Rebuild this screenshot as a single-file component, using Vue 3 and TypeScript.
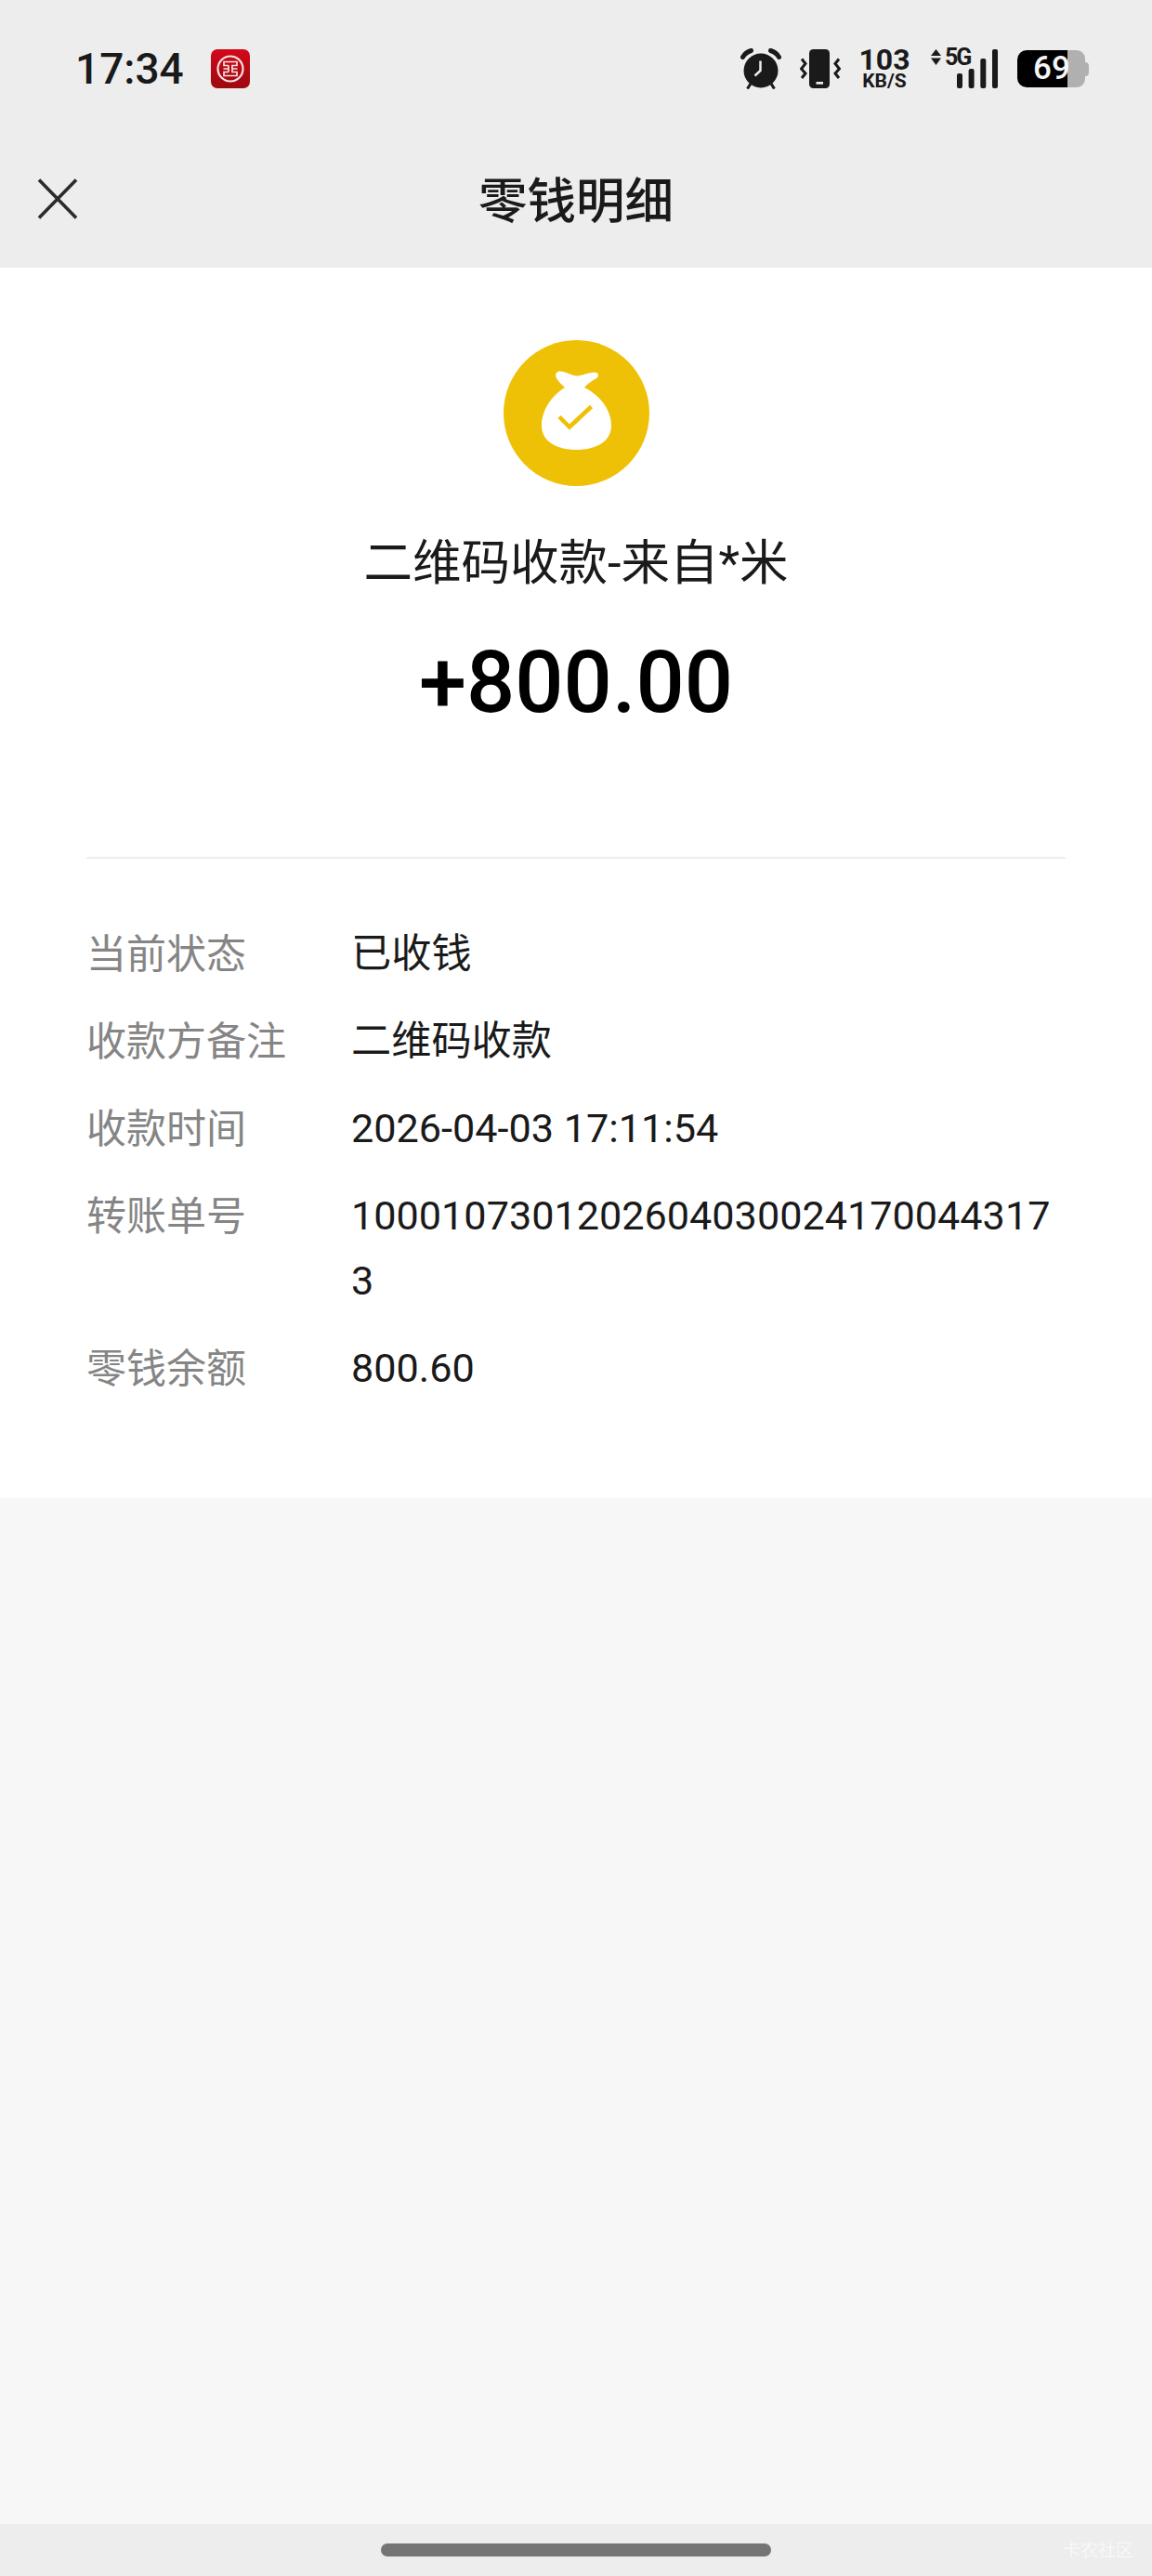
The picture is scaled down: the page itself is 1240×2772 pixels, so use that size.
<script setup lang="ts">
interface Row {
  label: string
  value: string
}

const rows: Row[] = [
  { label: '当前状态', value: '已收钱' },
  { label: '收款方备注', value: '二维码收款' },
  { label: '收款时间', value: '2026-04-03 17:11:54' },
  { label: '转账单号', value: '10001073012026040300241700443173' },
  { label: '零钱余额', value: '800.60' },
]
</script>

<template>
  <div class="page">
    <header class="top">
      <div class="status">
        <div class="status-left">
          <span class="time">17:34</span>
          <svg class="bank" viewBox="0 0 42 42" width="42" height="42">
            <defs>
              <linearGradient id="bankRed" x1="0" y1="0" x2="0" y2="1">
                <stop offset="0" stop-color="#d3081a" />
                <stop offset="1" stop-color="#9c0a10" />
              </linearGradient>
            </defs>
            <rect width="42" height="42" rx="7" fill="url(#bankRed)" />
            <circle cx="21" cy="21" r="13.500" fill="none" stroke="#f8e2e2" stroke-width="2.200" />
            <path d="M19 17.500H14V13.500H28V17.500H23V21H28.500M19 17.500V21H13.500M19 24.500H14V28.500H28V24.500H23V21M19 24.500V21" fill="none" stroke="#f8e2e2" stroke-width="1.700" />
          </svg>
        </div>
        <div class="status-right">
          <svg class="alarm" viewBox="0 0 44 44" width="44" height="44">
            <circle cx="22" cy="24" r="18.500" fill="#1a1a1a" />
            <path d="M2.500 9.500C4.500 6 8 3.500 11.500 2.500M41.500 9.500C39.500 6 36 3.500 32.500 2.500" fill="none" stroke="#1a1a1a" stroke-width="5" stroke-linecap="round" />
            <path d="M11 38L7.500 43.500M33 38L36.500 43.500" fill="none" stroke="#1a1a1a" stroke-width="3" />
            <path d="M21.500 13.500V24L15.500 29.500" fill="none" stroke="#ededed" stroke-width="2.500" />
          </svg>
          <svg class="vibrate" viewBox="0 0 44 42" width="44" height="42">
            <rect x="10" y="0" width="22" height="42" rx="4.500" fill="#1a1a1a" />
            <rect x="17.500" y="35" width="7.500" height="2.700" fill="#ededed" />
            <path d="M2 10.500L6 15.500L1.500 21L6 26L2 31" fill="none" stroke="#1a1a1a" stroke-width="3" />
            <path d="M42 10.500L38 15.500L42.500 21L38 26L42 31" fill="none" stroke="#1a1a1a" stroke-width="3" />
          </svg>
          <div class="speed">
            <span class="speed-num">103</span>
            <span class="speed-unit">KB/S</span>
          </div>
          <div class="net">
            <svg class="net-arrows" viewBox="0 0 11 17" width="11" height="17">
              <path d="M5.500 0L11 7H0ZM5.500 17L0 9.500H11Z" fill="#1a1a1a" />
            </svg>
            <span class="net-label">5G</span>
            <svg class="net-bars" viewBox="0 0 44 42" width="44" height="42">
              <rect x="0" y="26" width="6" height="16" rx="2" fill="#1a1a1a" />
              <rect x="12.600" y="21" width="6" height="21" rx="2" fill="#1a1a1a" />
              <rect x="25.300" y="10" width="6" height="32" rx="2" fill="#1a1a1a" />
              <rect x="38" y="0" width="6" height="42" rx="2" fill="#1a1a1a" />
            </svg>
          </div>
          <div class="battery">
            <span class="battery-fill"></span>
            <span class="battery-rest"></span>
            <span class="battery-nub"></span>
            <span class="battery-text">69</span>
          </div>
        </div>
      </div>
      <nav class="nav">
        <svg class="close" viewBox="0 0 44 44" width="44" height="44">
          <path d="M2 1.500L42 42.500M42 1.500L2 42.500" fill="none" stroke="#2b2b2b" stroke-width="3.600" />
        </svg>
        <h1 class="title">零钱明细</h1>
      </nav>
    </header>

    <main class="card">
      <div class="summary">
        <svg class="coin" viewBox="0 0 157 157" width="157" height="157">
          <circle cx="78.500" cy="78.500" r="78.500" fill="#eec106" />
          <path d="M60 33.500C66 33 72 38 79 38.500C86 38.500 92 34 100 35C103 36 102 40 100 41C95 44 90 47 87 51C103 59 116 74 116 92C116 110 98 118 78.500 118C59 118 41 110 41 92C41 74 53 59 66 51C62 47 58 44 56.500 40C55.500 36 57 34 60 33.500Z" fill="#fff" />
          <path d="M60 82.500L71 93.500L94.500 71.500" fill="none" stroke="#eec106" stroke-width="4.500" />
        </svg>
        <p class="subtitle">二维码收款-来自*米</p>
        <p class="amount">+800.00</p>
      </div>
      <div class="divider"></div>
      <dl class="details">
        <div v-for="row in rows" :key="row.label" class="row">
          <dt class="label">{{ row.label }}</dt>
          <dd class="value">{{ row.value }}</dd>
        </div>
      </dl>
    </main>

    <div class="filler"></div>

    <footer class="home">
      <span class="pill"></span>
      <span class="mark">卡农社区</span>
    </footer>
  </div>
</template>

<style>
html,
body {
  margin: 0;
  padding: 0;
  background: #f7f7f7;
}
</style>

<style scoped>
.page {
  display: flex;
  flex-direction: column;
  width: 1240px;
  height: 2772px;
  background: #f7f7f7;
  font-family: Roboto, "Noto Sans CJK SC", sans-serif;
  color: #1a1a1a;
}

.top {
  background: #ededed;
  height: 288px;
  box-sizing: border-box;
}

.status {
  display: flex;
  align-items: center;
  justify-content: space-between;
  height: 148px;
  padding: 0 68px 0 81px;
}

.status-left {
  display: flex;
  align-items: center;
  gap: 29px;
}

.time {
  font-size: 46px;
  font-weight: 500;
  line-height: 54px;
  color: #1a1a1a;
}

.bank {
  display: block;
}

.status-right {
  display: flex;
  align-items: center;
  gap: 20px;
}

.alarm,
.vibrate {
  display: block;
}

.speed {
  display: flex;
  flex-direction: column;
  align-items: center;
  width: 54px;
  font-weight: 700;
}

.speed-num {
  font-size: 32px;
  line-height: 25px;
}

.speed-unit {
  font-size: 21px;
  line-height: 19px;
  margin-top: 1px;
}

.net {
  position: relative;
  display: flex;
  align-items: flex-start;
  width: 72px;
  height: 44px;
  margin-left: 3px;
}

.net-arrows {
  display: block;
  margin-top: 1px;
}

.net-label {
  margin-left: 4px;
  font-size: 25px;
  font-weight: 700;
  line-height: 20px;
  letter-spacing: -2px;
}

.net-bars {
  position: absolute;
  right: 0;
  bottom: 1px;
}

.battery {
  position: relative;
  display: flex;
  align-items: center;
  width: 77px;
  height: 40px;
  margin-left: 1px;
}

.battery-fill {
  width: 54px;
  height: 40px;
  background: #000;
  border-radius: 10px 0 0 10px;
}

.battery-rest {
  width: 19px;
  height: 40px;
  background: #b0b0b0;
  border-radius: 0 9px 9px 0;
}

.battery-nub {
  width: 4px;
  height: 15px;
  background: #b0b0b0;
  border-radius: 0 4px 4px 0;
}

.battery-text {
  position: absolute;
  left: 17px;
  top: 0;
  font-size: 35px;
  font-weight: 500;
  line-height: 40px;
  color: #f5f5f5;
}

.nav {
  position: relative;
  display: flex;
  align-items: center;
  justify-content: center;
  height: 132px;
}

.close {
  position: absolute;
  left: 40px;
  top: 44px;
}

.title {
  margin: 6px 0 0;
  font-size: 52.500px;
  font-weight: 500;
  line-height: 72px;
  color: #1a1a1a;
}

.card {
  background: #fff;
  padding: 78px 93px 104px;
}

.summary {
  display: flex;
  flex-direction: column;
  align-items: center;
}

.coin {
  display: block;
}

.subtitle {
  margin: 47px 0 0;
  font-size: 52.500px;
  line-height: 72px;
  color: #1a1a1a;
}

.amount {
  margin: 37px 0 0;
  font-size: 92px;
  font-weight: 500;
  line-height: 112px;
  color: #000;
}

.divider {
  height: 2px;
  margin-top: 131px;
  background: #eeeeee;
}

.details {
  display: flex;
  flex-direction: column;
  gap: 24px;
  margin: 68px 0 0;
}

.row {
  display: flex;
}

.label {
  flex: 0 0 285px;
  font-size: 43px;
  line-height: 70px;
  color: #858585;
}

.value {
  flex: 1;
  margin: 0;
  font-size: 43.200px;
  line-height: 70px;
  color: #1a1a1a;
  word-break: break-all;
}

.filler {
  flex: 1;
}

.home {
  position: relative;
  display: flex;
  align-items: center;
  justify-content: center;
  height: 56px;
  background: #ededed;
}

.pill {
  width: 420px;
  height: 14px;
  background: #757575;
  border-radius: 7px;
}

.mark {
  position: absolute;
  right: 20px;
  top: 19px;
  font-size: 19px;
  line-height: 20px;
  color: rgba(255, 255, 255, 0.65);
}
</style>
